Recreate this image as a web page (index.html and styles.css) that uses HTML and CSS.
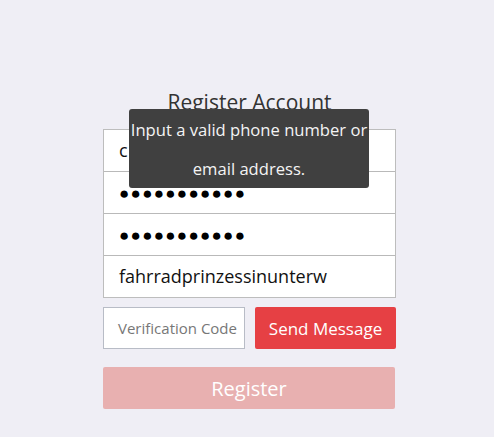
FILE: index.html
```html
<!DOCTYPE html>
<html>
<head>
<meta charset="utf-8">
<link rel="stylesheet" href="styles.css">
</head>
<body>
<main class="page">
  <h1 class="title">Register Account</h1>
  <div class="fields">
    <div class="field">c</div>
    <div class="field dots">●●●●●●●●●●●</div>
    <div class="field dots">●●●●●●●●●●●</div>
    <div class="field">fahrradprinzessinunterw</div>
    <div class="tooltip">Input a valid phone number or email address.</div>
  </div>
  <div class="verify">
    <div class="code">Verification Code</div>
    <button class="send">Send Message</button>
  </div>
  <button class="register">Register</button>
</main>
</body>
</html>
```
FILE: styles.css
```css
html, body {
  margin: 0;
  padding: 0;
  background: #efeef5;
  font-family: "Open Sans", "Noto Sans", sans-serif;
}
.page {
  width: 293px;
  margin-left: 103px;
  padding-top: 89px;
  display: flex;
  flex-direction: column;
}
.title {
  margin: 0 0 13px 0;
  font-size: 21px;
  font-weight: normal;
  color: #333;
  text-align: center;
  line-height: 27px;
}
.fields {
  position: relative;
  border: 1px solid #bdbdbd;
  background: #fff;
  display: flex;
  flex-direction: column;
}
.field {
  height: 41px;
  line-height: 41px;
  padding-left: 15px;
  font-size: 18px;
  color: #111;
  border-top: 1px solid #b9b9b9;
}
.field:first-child {
  border-top: none;
}
.dots {
  font-size: 17px;
  letter-spacing: 1.3px;
  color: #000;
}
.tooltip {
  position: absolute;
  left: 25px;
  top: -21px;
  width: 240px;
  height: 79px;
  box-sizing: border-box;
  padding: 1px 0 0;
  background: #404040;
  border-radius: 3px;
  color: #f4f4f4;
  font-size: 16.6px;
  line-height: 39px;
  text-align: center;
}
.verify {
  margin-top: 9px;
  display: flex;
  gap: 10px;
}
.code {
  width: 142px;
  height: 42px;
  box-sizing: border-box;
  border: 1px solid #b8bcc6;
  background: #fff;
  padding-left: 14px;
  line-height: 40px;
  font-size: 15px;
  color: #777;
}
.send {
  width: 141px;
  height: 42px;
  border: none;
  border-radius: 2px;
  background: #e64044;
  color: #fff;
  font-family: inherit;
  font-size: 17px;
  padding: 0;
}
.register {
  margin-top: 18px;
  width: 292px;
  height: 42px;
  border: none;
  border-radius: 2px;
  background: #e8b0b0;
  color: #fff;
  font-family: inherit;
  font-size: 20px;
  padding: 0;
}
```
